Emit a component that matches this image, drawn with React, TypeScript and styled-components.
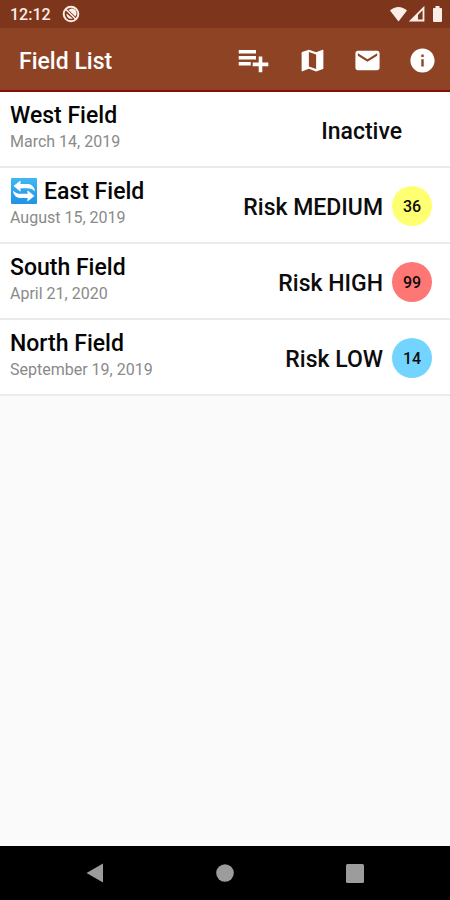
import React from "react";
import styled, { createGlobalStyle } from "styled-components";

const GlobalStyle = createGlobalStyle`
  *, *::before, *::after { box-sizing: border-box; }
  body {
    margin: 0;
    background: #fafafa;
    color: #0c0c0c;
    font-family: Roboto, "Liberation Sans", sans-serif;
  }
`;

const Screen = styled.div`
  display: flex;
  flex-direction: column;
  min-height: 100vh;
`;

const StatusBar = styled.div`
  display: flex;
  align-items: center;
  justify-content: space-between;
  height: 28px;
  padding: 0 7px 0 10px;
  background: #7d361b;
  color: #fbeee8;
`;

const StatusGroup = styled.div<{ $gap: number }>`
  display: flex;
  align-items: center;
  gap: ${({ $gap }) => $gap}px;
`;

const Clock = styled.time`
  font-size: 16px;
  line-height: 28px;
  font-weight: 500;
  padding-top: 2px;
`;

const AppBar = styled.header`
  display: flex;
  align-items: center;
  justify-content: space-between;
  height: 64px;
  padding-left: 19px;
  background: #8f4325;
  border-bottom: 2px solid #850f08;
  color: #fff;
`;

const Title = styled.h1`
  margin: 0;
  padding-top: 6px;
  font-size: 23px;
  line-height: 28px;
  font-weight: 500;
`;

const Actions = styled.nav`
  display: flex;
  height: 100%;
`;

const IconButton = styled.button<{ $wide?: boolean }>`
  display: flex;
  align-items: center;
  justify-content: center;
  width: ${({ $wide }) => ($wide ? 64 : 55)}px;
  height: 100%;
  padding: 2px 0 0;
  border: 0;
  background: none;
  color: inherit;
`;

const List = styled.ul`
  flex: 1;
  margin: 0;
  padding: 0;
  list-style: none;
`;

const Row = styled.li`
  display: flex;
  align-items: center;
  justify-content: space-between;
  height: 76px;
  padding: 0 18px 0 10px;
  background: #fff;
  border-bottom: 2px solid #ebebeb;
`;

const Info = styled.div`
  display: flex;
  flex-direction: column;
  height: 100%;
  padding-top: 10px;
`;

const Name = styled.h2`
  display: flex;
  align-items: flex-start;
  gap: 7px;
  margin: 0;
  font-size: 23px;
  line-height: 28px;
  font-weight: 500;
  color: #050505;
`;

const DateText = styled.time`
  font-size: 16px;
  line-height: 24px;
  color: #8a8a8a;
`;

const Status = styled.div<{ $inactive?: boolean }>`
  display: flex;
  align-items: center;
  gap: 9px;
  padding: 2px ${({ $inactive }) => ($inactive ? 30 : 0)}px 0 0;
`;

const Risk = styled.span`
  padding-top: 3px;
  font-size: 23px;
  line-height: 28px;
  font-weight: 500;
`;

const Badge = styled.span<{ $color: string }>`
  display: flex;
  align-items: center;
  justify-content: center;
  width: 40px;
  height: 40px;
  padding-top: 1px;
  border-radius: 50%;
  background: ${({ $color }) => $color};
  font-size: 16px;
  line-height: 20px;
  font-weight: 500;
`;

const NavBar = styled.footer`
  display: flex;
  justify-content: space-around;
  height: 54px;
  padding: 0 30px;
  background: #000;
  color: #9c9c9c;
`;

const NavButton = styled.button`
  display: flex;
  align-items: center;
  justify-content: center;
  width: 64px;
  padding: 0;
  border: 0;
  background: none;
  color: inherit;
`;

const Icon = ({ d, size }: { d: string; size: number }) => (
  <svg width={size} height={size} viewBox="0 0 24 24" fill="currentColor" aria-hidden="true">
    <path d={d} />
  </svg>
);

const actions = [
  {
    label: "Add field",
    size: 36,
    d: "M14 9.300H2.500v2.400H14zm0-4H2.500v2.400H14zm4.200 8.400v-4h-2.400v4h-4v2.400h4v4h2.400v-4h4v-2.400zM2.500 15.700h8v-2.400h-8z",
  },
  {
    label: "Map",
    size: 29,
    d: "M20.5 3l-.16.03L15 5.1 9 3 3.36 4.9c-.21.07-.36.25-.36.48V20.5c0 .28.22.5.5.5l.16-.03L9 18.9l6 2.1 5.64-1.9c.21-.07.36-.25.36-.48V3.5c0-.28-.22-.5-.5-.5zM15 19l-6-2.11V5l6 2.11V19z",
  },
  {
    label: "Mail",
    size: 29,
    d: "M20 4H4c-1.1 0-1.99.9-1.99 2L2 18c0 1.1.9 2 2 2h16c1.1 0 2-.9 2-2V6c0-1.1-.9-2-2-2zm0 4l-8 5-8-5V6l8 5 8-5v2z",
  },
  {
    label: "Information",
    size: 29,
    d: "M12 2C6.48 2 2 6.48 2 12s4.48 10 10 10 10-4.48 10-10S17.52 2 12 2zm1 15h-2v-6h2v6zm0-8h-2V7h2v2z",
  },
];

type Field = {
  name: string;
  date: string;
  status: string;
  syncing?: boolean;
  score?: number;
  color?: string;
};

const fields: Field[] = [
  { name: "West Field", date: "March 14, 2019", status: "Inactive" },
  { name: "East Field", date: "August 15, 2019", status: "Risk MEDIUM", syncing: true, score: 36, color: "#ffff72" },
  { name: "South Field", date: "April 21, 2020", status: "Risk HIGH", score: 99, color: "#ff7774" },
  { name: "North Field", date: "September 19, 2019", status: "Risk LOW", score: 14, color: "#72d4ff" },
];

const SyncIcon = () => (
  <svg width="27" height="27" viewBox="0 0 27 27" role="img" aria-label="Syncing">
    <defs>
      <linearGradient id="sync" x1="0" y1="0" x2="0" y2="1">
        <stop offset="0" stopColor="#42b6f5" />
        <stop offset="1" stopColor="#1e93e8" />
      </linearGradient>
    </defs>
    <rect x="1" y="0" width="26" height="26" rx="1" fill="url(#sync)" />
    <path
      d="M3.500 8 10.500 2.500v3.500h6.500c4.500 0 7.500 2.500 8 7.500-2-2.500-4.500-3.300-8-3.300h-6.500v3.500z"
      fill="#fff"
    />
    <path
      d="M24.500 18 17.500 23.500v-3.500h-6.500c-4.500 0-7.500-2.500-8-7.500 2 2.500 4.500 3.300 8 3.300h6.500v-3.500z"
      fill="#fff"
    />
  </svg>
);

export default function App() {
  return (
    <Screen>
      <GlobalStyle />
      <StatusBar>
        <StatusGroup $gap={11}>
          <Clock>12:12</Clock>
          <svg width="18" height="18" viewBox="0 0 18 18" aria-hidden="true">
            <circle cx="9" cy="9" r="7.300" fill="none" stroke="currentColor" strokeWidth="2" />
            <path d="M4.500 8.500a4.600 4.600 0 0 0 6.200 5zM6.500 5a4.700 4.700 0 0 1 6.800 6.500z" fill="currentColor" />
            <path d="M4 4.500 13.500 14" stroke="currentColor" strokeWidth="1.600" />
          </svg>
        </StatusGroup>
        <StatusGroup $gap={2}>
          <svg width="17" height="16" viewBox="0 0 17 16" fill="currentColor" aria-hidden="true">
            <path d="M0 4.500C5-.2 12-.2 17 4.500L8.500 15.500z" />
          </svg>
          <svg width="16" height="16" viewBox="0 0 16 16" aria-hidden="true">
            <path d="M14.500 2v12.500H2z" fill="none" stroke="currentColor" strokeWidth="1.800" />
            <path d="M9 8v6.500H2z" fill="currentColor" />
          </svg>
          <svg width="16" height="16" viewBox="0 0 16 16" fill="currentColor" aria-hidden="true">
            <path d="M8.500 0h4v2h1.500q1 0 1 1v12q0 1-1 1H7q-1 0-1-1V3q0-1 1-1h1.500z" />
          </svg>
        </StatusGroup>
      </StatusBar>
      <AppBar>
        <Title>Field List</Title>
        <Actions>
          {actions.map(({ label, size, d }) => (
            <IconButton key={label} type="button" aria-label={label} $wide={size > 30}>
              <Icon d={d} size={size} />
            </IconButton>
          ))}
        </Actions>
      </AppBar>
      <List>
        {fields.map((field) => (
          <Row key={field.name}>
            <Info>
              <Name>
                {field.syncing && <SyncIcon />}
                {field.name}
              </Name>
              <DateText>{field.date}</DateText>
            </Info>
            <Status $inactive={!field.color}>
              <Risk>{field.status}</Risk>
              {field.color && <Badge $color={field.color}>{field.score}</Badge>}
            </Status>
          </Row>
        ))}
      </List>
      <NavBar>
        <NavButton type="button" aria-label="Back">
          <svg width="18" height="20" viewBox="0 0 18 20" fill="currentColor" aria-hidden="true">
            <path d="M17 .5v19L.5 10z" />
          </svg>
        </NavButton>
        <NavButton type="button" aria-label="Home">
          <svg width="18" height="18" viewBox="0 0 18 18" fill="currentColor" aria-hidden="true">
            <circle cx="9" cy="9" r="8.800" />
          </svg>
        </NavButton>
        <NavButton type="button" aria-label="Recent apps">
          <svg width="18" height="19" viewBox="0 0 18 19" fill="currentColor" aria-hidden="true">
            <rect width="18" height="19" rx="1.500" />
          </svg>
        </NavButton>
      </NavBar>
    </Screen>
  );
}
